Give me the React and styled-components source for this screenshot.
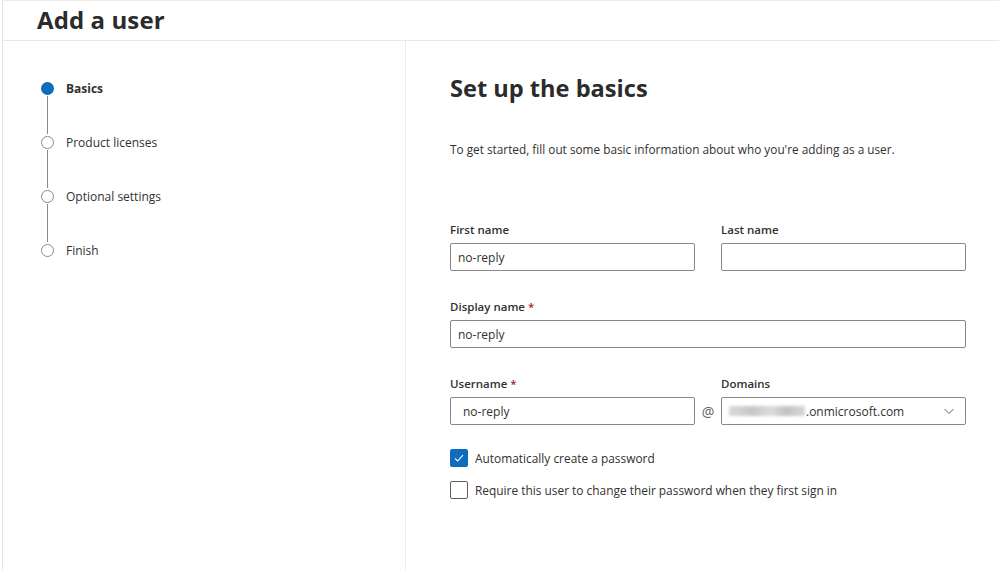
import React from "react";
import styled, { createGlobalStyle } from "styled-components";

const GlobalStyle = createGlobalStyle`
  html, body {
    margin: 0;
    padding: 0;
    background: #fff;
  }
  body {
    font-family: "Open Sans", "Noto Sans", sans-serif;
    color: #323130;
  }
`;

const Page = styled.div`
  height: 570px;
  margin-left: 2px;
  border-left: 1px solid #e6e6e6;
  border-top: 1px solid #ececec;
  box-sizing: border-box;
  display: flex;
  flex-direction: column;
`;

const Header = styled.header`
  height: 40px;
  border-bottom: 1px solid #e8e8e8;
  padding: 0 0 3px 34px;
  box-sizing: border-box;
  display: flex;
  align-items: center;

  > h1 {
    margin: 0;
    font-size: 24px;
    font-weight: 700;
    color: #2b2b2b;
    letter-spacing: 0.1px;
  }
`;

const Body = styled.div`
  flex: 1;
  display: flex;
`;

const Sidebar = styled.nav`
  width: 403px;
  border-right: 1px solid #ececec;
  padding: 40px 0 0 38px;
  box-sizing: border-box;
`;

const Step = styled.div`
  position: relative;
  display: flex;
  align-items: center;
  gap: 12px;
  height: 14px;
  margin-bottom: 40px;
  font-size: 12px;
  color: #323130;
  font-weight: ${(p) => (p.$active ? 700 : 400)};

  &:not(:last-child)::after {
    content: "";
    position: absolute;
    left: 6px;
    top: 15px;
    width: 1px;
    height: 38px;
    background: #8a8886;
  }
`;

const Dot = styled.span`
  width: 13px;
  height: 13px;
  border-radius: 50%;
  box-sizing: border-box;
  flex: none;
  background: ${(p) => (p.$active ? "#0f6cbd" : "#fff")};
  border: ${(p) => (p.$active ? "none" : "1.5px solid #8a8886")};
`;

const Main = styled.main`
  flex: 1;
  padding: 30px 32px 0 44px;
  box-sizing: border-box;

  > h2 {
    margin: 0;
    font-size: 23.6px;
    font-weight: 700;
    color: #2b2b2b;
    line-height: 34px;
    letter-spacing: 0;
  }
`;

const Intro = styled.p`
  margin: 36px 0 0;
  font-size: 11.8px;
  color: #323130;
`;

const Grid = styled.div`
  display: grid;
  grid-template-columns: 245px 26px 245px;
  margin-top: 66px;
`;

const Field = styled.div`
  grid-column: ${(p) => p.$span || "auto"};
  margin-bottom: ${(p) => p.$mb ?? 29}px;
`;

const Label = styled.div`
  font-size: 11.5px;
  font-weight: 600;
  color: #323130;
  margin-bottom: 6px;
  line-height: 14px;

  > span {
    color: #a4262c;
  }
`;

const Input = styled.div`
  height: 28px;
  border: 1px solid #8a8886;
  border-radius: 2px;
  box-sizing: border-box;
  padding: 0 ${(p) => p.$pl || 7}px;
  display: flex;
  align-items: center;
  font-size: 12px;
  color: #323130;
`;

const At = styled.div`
  align-self: end;
  height: 28px;
  margin-bottom: 24px;
  display: flex;
  align-items: center;
  justify-content: center;
  font-size: 14px;
  color: #605e5c;
`;

const Blur = styled.span`
  display: inline-block;
  width: 76px;
  height: 10px;
  background: linear-gradient(90deg, #dadada 0%, #c6c6c6 30%, #dcdcdc 55%, #c2c2c2 75%, #d8d8d8 100%);
  filter: blur(1.5px);
  margin-right: 1px;
`;

const Select = styled(Input)`
  justify-content: space-between;
  padding-right: 10px;
`;

const Checks = styled.div`
  display: flex;
  flex-direction: column;
  gap: 14px;
`;

const Check = styled.label`
  display: flex;
  align-items: center;
  gap: 7px;
  font-size: 11.9px;
  color: #323130;
`;

const Box = styled.span`
  width: 18px;
  height: 18px;
  box-sizing: border-box;
  border-radius: 2px;
  display: flex;
  align-items: center;
  justify-content: center;
  background: ${(p) => (p.$checked ? "#0f6cbd" : "#fff")};
  border: ${(p) => (p.$checked ? "none" : "1px solid #605e5c")};
`;

const steps = [
  { name: "Basics", active: true },
  { name: "Product licenses" },
  { name: "Optional settings" },
  { name: "Finish" },
];

export default function App() {
  return (
    <>
      <GlobalStyle />
      <Page>
        <Header>
          <h1>Add a user</h1>
        </Header>
        <Body>
          <Sidebar>
            {steps.map((s) => (
              <Step key={s.name} $active={s.active}>
                <Dot $active={s.active} />
                {s.name}
              </Step>
            ))}
          </Sidebar>
          <Main>
            <h2>Set up the basics</h2>
            <Intro>
              To get started, fill out some basic information about who you're adding as a user.
            </Intro>
            <Grid>
              <Field $span="1">
                <Label>First name</Label>
                <Input>no-reply</Input>
              </Field>
              <div />
              <Field $span="3">
                <Label>Last name</Label>
                <Input />
              </Field>
              <Field $span="1 / 4">
                <Label>Display name <span>*</span></Label>
                <Input>no-reply</Input>
              </Field>
              <Field $span="1" $mb={24}>
                <Label>Username <span>*</span></Label>
                <Input $pl={12}>no-reply</Input>
              </Field>
              <At>@</At>
              <Field $span="3" $mb={24}>
                <Label>Domains</Label>
                <Select>
                  <span style={{ display: "flex", alignItems: "center" }}>
                    <Blur />
                    .onmicrosoft.com
                  </span>
                  <svg width="12" height="12" viewBox="0 0 12 12">
                    <path d="M1.5 4 L6 8.5 L10.5 4" fill="none" stroke="#605e5c" strokeWidth="1" />
                  </svg>
                </Select>
              </Field>
            </Grid>
            <Checks>
              <Check>
                <Box $checked>
                  <svg width="12" height="12" viewBox="0 0 12 12">
                    <path d="M2 6.3 L4.7 9 L10 3.2" fill="none" stroke="#fff" strokeWidth="1.1" />
                  </svg>
                </Box>
                Automatically create a password
              </Check>
              <Check>
                <Box />
                Require this user to change their password when they first sign in
              </Check>
            </Checks>
          </Main>
        </Body>
      </Page>
    </>
  );
}
